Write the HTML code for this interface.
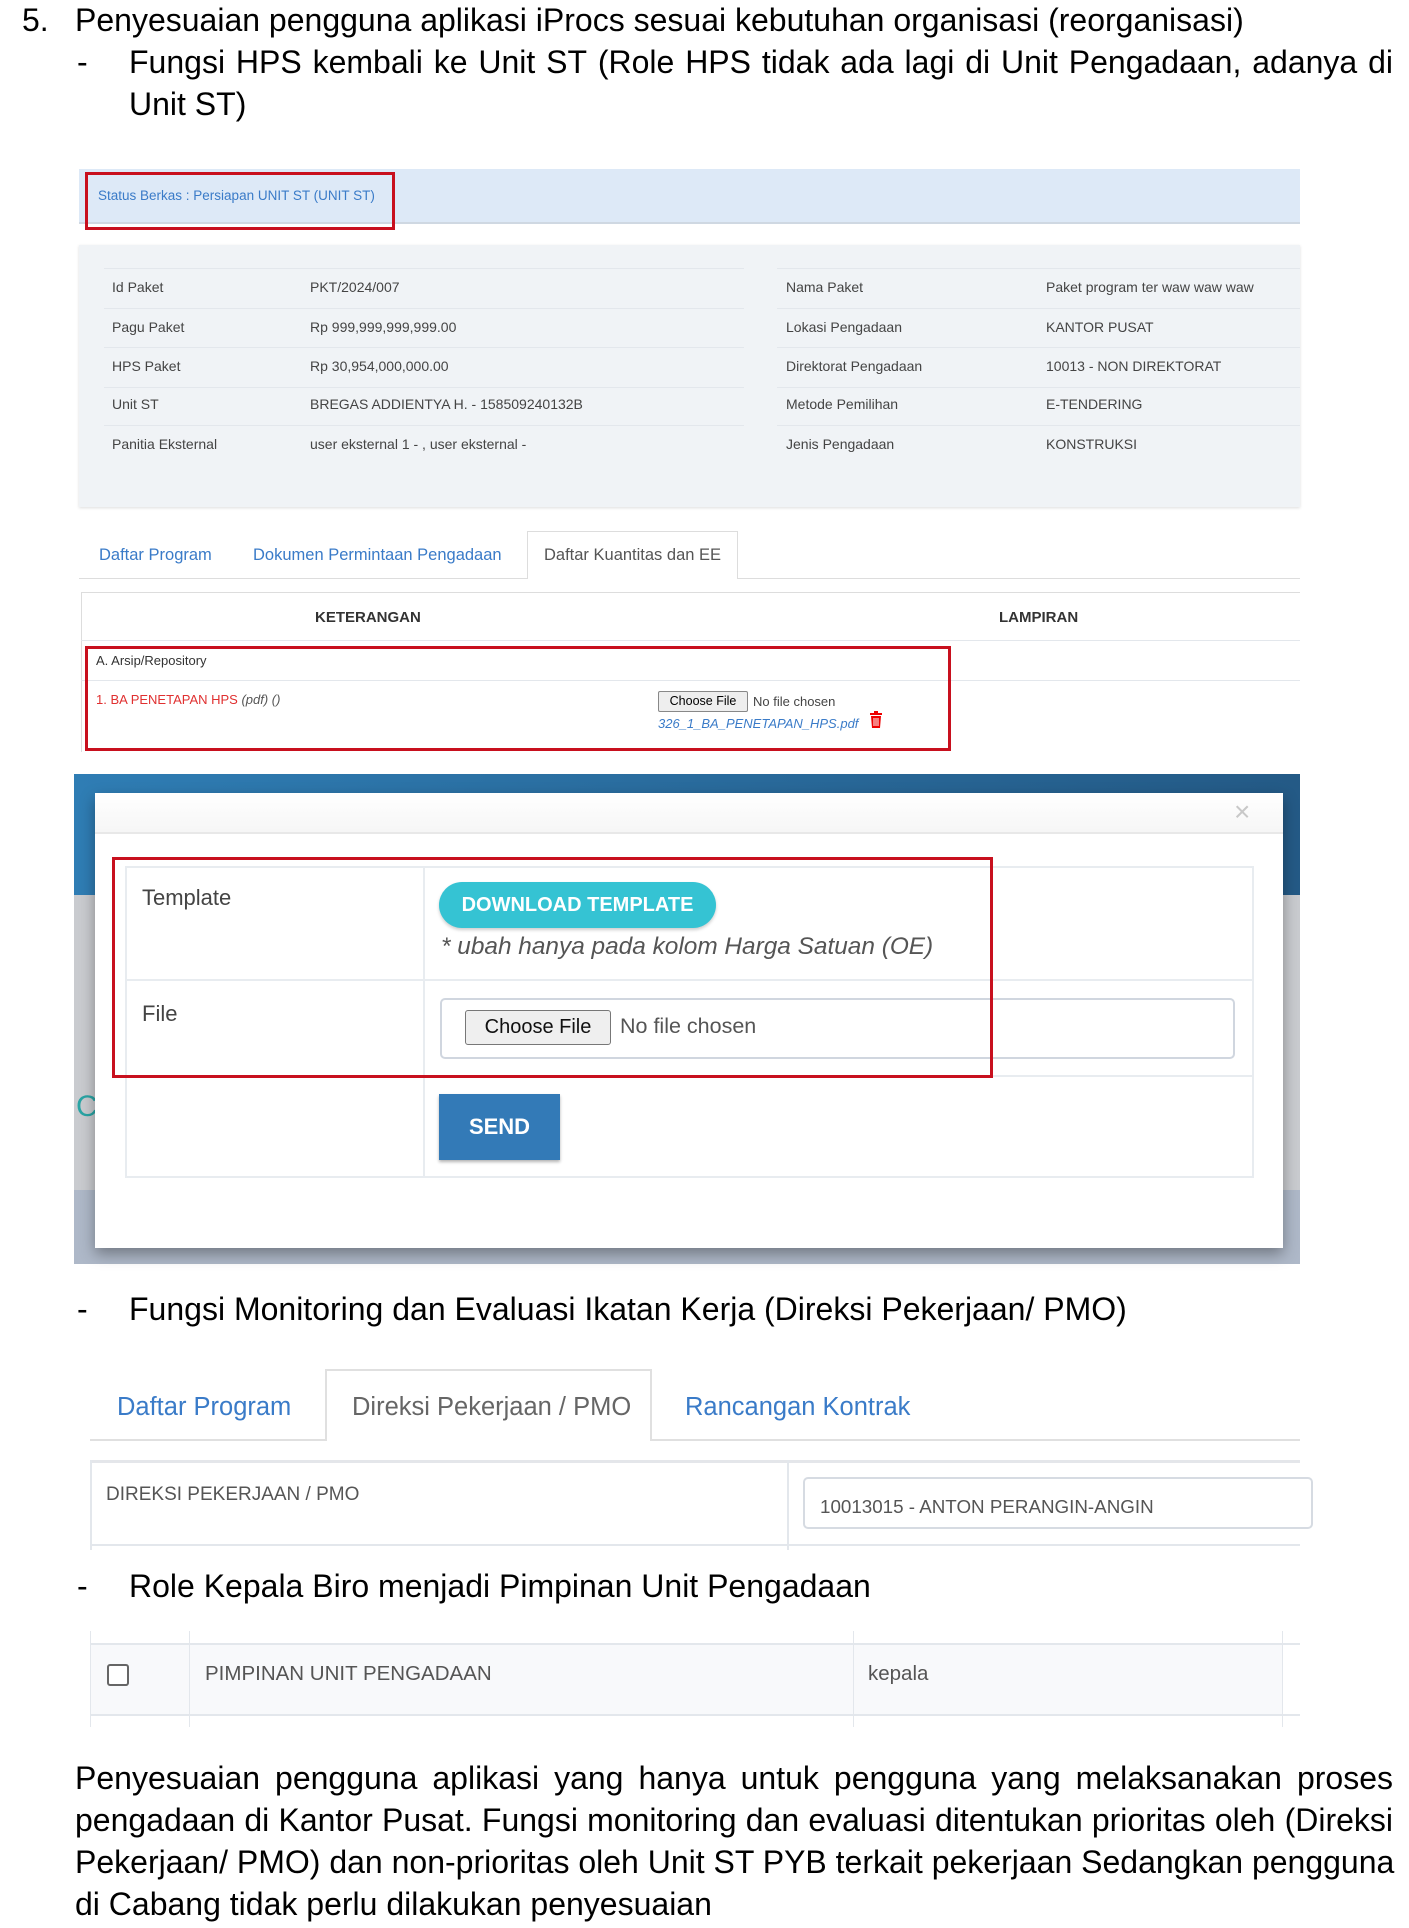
<!DOCTYPE html>
<html><head><meta charset="utf-8"><style>
*{margin:0;padding:0;box-sizing:border-box}
body{width:1409px;height:1928px;background:#fff;position:relative;overflow:hidden;font-family:"Liberation Sans",sans-serif;color:#000}
.a{position:absolute;white-space:nowrap}
.big{font-size:32px;line-height:34px}
.sm{font-size:14px;color:#444;line-height:16px}
.hl{position:absolute;height:1px;background:#e3e7ec}
.vl{position:absolute;width:1px;background:#e3e7ec}
.red{position:absolute;border:3px solid #c8101e}
.jl{position:absolute;left:75px;width:1318px;font-size:32px;line-height:34px;text-align:justify;text-align-last:justify;white-space:nowrap}
</style></head><body>
<div class="a big" style="left:22px;top:3px">5.</div>
<div class="a big" style="left:75px;top:3px">Penyesuaian pengguna aplikasi iProcs sesuai kebutuhan organisasi (reorganisasi)</div>
<div class="a big" style="left:77px;top:45px">-</div>
<div class="a big" style="left:129px;top:45px;width:1264px;display:flex;justify-content:space-between"><span>Fungsi</span><span>HPS</span><span>kembali</span><span>ke</span><span>Unit</span><span>ST</span><span>(Role</span><span>HPS</span><span>tidak</span><span>ada</span><span>lagi</span><span>di</span><span>Unit</span><span>Pengadaan,</span><span>adanya</span><span>di</span></div>
<div class="a big" style="left:129px;top:87px">Unit ST)</div>

<div class="a" style="left:79px;top:169px;width:1221px;height:55px;background:#dde9f7;border-bottom:2px solid #cfd8e2"></div>
<div class="a" style="left:98px;top:188px;font-size:13.5px;color:#3a7bc8">Status Berkas : Persiapan UNIT ST (UNIT ST)</div>
<div class="red" style="left:85px;top:172px;width:310px;height:58px"></div>

<div class="a" style="left:79px;top:245px;width:1221px;height:262px;background:#f0f3f6;box-shadow:0 1px 3px #ddd"></div>
<div class="hl" style="left:104px;top:268px;width:640px"></div><div class="hl" style="left:777px;top:268px;width:523px"></div>
<div class="hl" style="left:104px;top:308px;width:640px"></div><div class="hl" style="left:777px;top:308px;width:523px"></div>
<div class="hl" style="left:104px;top:347px;width:640px"></div><div class="hl" style="left:777px;top:347px;width:523px"></div>
<div class="hl" style="left:104px;top:387px;width:640px"></div><div class="hl" style="left:777px;top:387px;width:523px"></div>
<div class="hl" style="left:104px;top:425px;width:640px"></div><div class="hl" style="left:777px;top:425px;width:523px"></div>
<div class="a sm" style="left:112px;top:279px">Id Paket</div><div class="a sm" style="left:310px;top:279px">PKT/2024/007</div><div class="a sm" style="left:786px;top:279px">Nama Paket</div><div class="a sm" style="left:1046px;top:279px">Paket program ter waw waw waw</div>
<div class="a sm" style="left:112px;top:319px">Pagu Paket</div><div class="a sm" style="left:310px;top:319px">Rp 999,999,999,999.00</div><div class="a sm" style="left:786px;top:319px">Lokasi Pengadaan</div><div class="a sm" style="left:1046px;top:319px">KANTOR PUSAT</div>
<div class="a sm" style="left:112px;top:358px">HPS Paket</div><div class="a sm" style="left:310px;top:358px">Rp 30,954,000,000.00</div><div class="a sm" style="left:786px;top:358px">Direktorat Pengadaan</div><div class="a sm" style="left:1046px;top:358px">10013 - NON DIREKTORAT</div>
<div class="a sm" style="left:112px;top:396px">Unit ST</div><div class="a sm" style="left:310px;top:396px">BREGAS ADDIENTYA H. - 158509240132B</div><div class="a sm" style="left:786px;top:396px">Metode Pemilihan</div><div class="a sm" style="left:1046px;top:396px">E-TENDERING</div>
<div class="a sm" style="left:112px;top:436px">Panitia Eksternal</div><div class="a sm" style="left:310px;top:436px">user eksternal 1 - , user eksternal -</div><div class="a sm" style="left:786px;top:436px">Jenis Pengadaan</div><div class="a sm" style="left:1046px;top:436px">KONSTRUKSI</div>

<div class="hl" style="left:79px;top:578px;width:1221px;background:#ddd"></div>
<div class="a" style="left:527px;top:531px;width:211px;height:48px;background:#fff;border:1px solid #ddd;border-bottom:none"></div>
<div class="a" style="left:99px;top:546px;font-size:16.5px;color:#3a7bc8">Daftar Program</div>
<div class="a" style="left:253px;top:546px;font-size:16.5px;color:#3a7bc8">Dokumen Permintaan Pengadaan</div>
<div class="a" style="left:544px;top:546px;font-size:16.5px;color:#555">Daftar Kuantitas dan EE</div>

<div class="hl" style="left:81px;top:592px;width:1219px;background:#ddd"></div>
<div class="vl" style="left:81px;top:592px;height:160px;background:#ddd"></div>
<div class="a" style="left:315px;top:609px;font-size:15px;font-weight:bold;color:#333">KETERANGAN</div>
<div class="a" style="left:999px;top:609px;font-size:15px;font-weight:bold;color:#333">LAMPIRAN</div>
<div class="hl" style="left:81px;top:640px;width:1219px"></div>
<div class="hl" style="left:81px;top:680px;width:1219px"></div>
<div class="a" style="left:96px;top:653px;font-size:13px;color:#333">A. Arsip/Repository</div>
<div class="a" style="left:96px;top:692px;font-size:13px;color:#e03030">1. BA PENETAPAN HPS <i style="color:#555">(pdf) ()</i></div>
<div class="a" style="left:658px;top:691px;width:90px;height:21px;border:1px solid #888;border-radius:2px;background:#eee;font-size:12.5px;text-align:center;line-height:19px">Choose File</div>
<div class="a" style="left:753px;top:694px;font-size:13px;color:#444">No file chosen</div>
<div class="a" style="left:658px;top:716px;font-size:13px;color:#3a7bc8;font-style:italic">326_1_BA_PENETAPAN_HPS.pdf</div>
<svg class="a" style="left:869px;top:711px" width="14" height="17" viewBox="0 0 14 17"><rect x="1" y="2" width="12" height="2" fill="#e00"/><rect x="5" y="0" width="4" height="3" fill="#e00"/><path d="M2 5h10l-1 12H3z" fill="#e00"/><path d="M5 7v8M7 7v8M9 7v8" stroke="#fff" stroke-width="1"/></svg>
<div class="red" style="left:85px;top:646px;width:866px;height:105px"></div>

<div class="a" style="left:74px;top:774px;width:1226px;height:121px;background:linear-gradient(90deg,#2f7db4,#245a86)"></div>
<div class="a" style="left:74px;top:895px;width:1226px;height:369px;background:#c9cbcf"></div>
<div class="a" style="left:74px;top:1190px;width:1226px;height:74px;background:#aeb8c8"></div>
<div class="a" style="left:76px;top:1090px;font-size:30px;color:#2aa5a5">C</div>
<div class="a" style="left:95px;top:793px;width:1188px;height:455px;background:#fff;box-shadow:0 6px 14px rgba(0,0,0,.35)"></div>
<div class="a" style="left:95px;top:793px;width:1188px;height:41px;background:linear-gradient(#fff,#f6f6f6);border-bottom:2px solid #e8e8e8"></div>
<div class="a" style="left:1234px;top:796px;font-size:28px;color:#c8c8c8">×</div>
<div class="a" style="left:125px;top:866px;width:1129px;height:312px;border:2px solid #e8ecf0"></div>
<div class="vl" style="left:423px;top:866px;height:312px;width:2px;background:#e8ecf0"></div>
<div class="hl" style="left:125px;top:979px;width:1129px;height:2px;background:#e8ecf0"></div>
<div class="hl" style="left:125px;top:1075px;width:1129px;height:2px;background:#e8ecf0"></div>
<div class="a" style="left:142px;top:885px;font-size:22px;color:#444">Template</div>
<div class="a" style="left:142px;top:1001px;font-size:22px;color:#444">File</div>
<div class="a" style="left:439px;top:882px;width:277px;height:46px;border-radius:23px;background:#35c3d3;color:#fff;font-size:20px;font-weight:bold;text-align:center;line-height:46px;box-shadow:0 2px 3px rgba(0,0,0,.2)">DOWNLOAD TEMPLATE</div>
<div class="a" style="left:441px;top:933px;font-size:24.4px;font-style:italic;color:#555">* ubah hanya pada kolom Harga Satuan (OE)</div>
<div class="a" style="left:440px;top:998px;width:795px;height:61px;border:2px solid #d0d6df;border-radius:5px"></div>
<div class="a" style="left:465px;top:1010px;width:146px;height:35px;border:1px solid #777;border-radius:3px;background:#efefef;font-size:20px;text-align:center;line-height:33px;color:#111">Choose File</div>
<div class="a" style="left:620px;top:1014px;font-size:21.5px;color:#555">No file chosen</div>
<div class="a" style="left:439px;top:1094px;width:121px;height:66px;background:#337ab7;color:#fff;font-size:22px;font-weight:bold;text-align:center;line-height:66px;box-shadow:0 2px 3px rgba(0,0,0,.3)">SEND</div>
<div class="red" style="left:112px;top:857px;width:881px;height:221px"></div>

<div class="a big" style="left:77px;top:1292px">-</div>
<div class="a big" style="left:129px;top:1292px">Fungsi Monitoring dan Evaluasi Ikatan Kerja (Direksi Pekerjaan/ PMO)</div>

<div class="hl" style="left:90px;top:1439px;width:1210px;height:2px;background:#e0e0e0"></div>
<div class="a" style="left:325px;top:1369px;width:327px;height:72px;background:#fff;border:2px solid #e0e0e0;border-bottom:none"></div>
<div class="a" style="left:117px;top:1393px;font-size:25.5px;color:#3a7bc8">Daftar Program</div>
<div class="a" style="left:352px;top:1393px;font-size:25.5px;color:#666">Direksi Pekerjaan / PMO</div>
<div class="a" style="left:685px;top:1393px;font-size:25.5px;color:#3a7bc8">Rancangan Kontrak</div>
<div class="hl" style="left:90px;top:1460px;width:1210px;height:3px;background:#e4e6ea"></div>
<div class="vl" style="left:90px;top:1460px;height:90px;width:2px"></div>
<div class="vl" style="left:787px;top:1460px;height:90px;width:2px"></div>
<div class="hl" style="left:90px;top:1544px;width:1210px;height:2px"></div>
<div class="a" style="left:106px;top:1484px;font-size:19px;color:#555">DIREKSI PEKERJAAN / PMO</div>
<div class="a" style="left:803px;top:1477px;width:510px;height:52px;border:2px solid #d6dbe2;border-radius:5px"></div>
<div class="a" style="left:820px;top:1496px;font-size:18.8px;color:#555">10013015 - ANTON PERANGIN-ANGIN</div>

<div class="a big" style="left:77px;top:1569px">-</div>
<div class="a big" style="left:129px;top:1569px">Role Kepala Biro menjadi Pimpinan Unit Pengadaan</div>

<div class="a" style="left:90px;top:1643px;width:1193px;height:72px;background:#f8f9fb"></div>
<div class="hl" style="left:90px;top:1643px;width:1210px;height:2px"></div>
<div class="hl" style="left:90px;top:1714px;width:1210px;height:2px"></div>
<div class="vl" style="left:90px;top:1631px;height:96px"></div>
<div class="vl" style="left:189px;top:1631px;height:96px"></div>
<div class="vl" style="left:853px;top:1631px;height:96px"></div>
<div class="vl" style="left:1282px;top:1631px;height:96px"></div>
<div class="a" style="left:107px;top:1664px;width:22px;height:22px;border:2px solid #666;border-radius:3px;background:#fff"></div>
<div class="a" style="left:205px;top:1662px;font-size:20.5px;color:#555">PIMPINAN UNIT PENGADAAN</div>
<div class="a" style="left:868px;top:1662px;font-size:20.5px;color:#555">kepala</div>

<div class="jl" style="top:1761px">Penyesuaian pengguna aplikasi yang hanya untuk pengguna yang melaksanakan proses</div>
<div class="jl" style="top:1803px">pengadaan di Kantor Pusat. Fungsi monitoring dan evaluasi ditentukan prioritas oleh (Direksi</div>
<div class="jl" style="top:1845px">Pekerjaan/ PMO) dan non-prioritas oleh Unit ST PYB terkait pekerjaan Sedangkan pengguna</div>
<div class="a big" style="left:75px;top:1887px">di Cabang tidak perlu dilakukan penyesuaian</div>
</body></html>
